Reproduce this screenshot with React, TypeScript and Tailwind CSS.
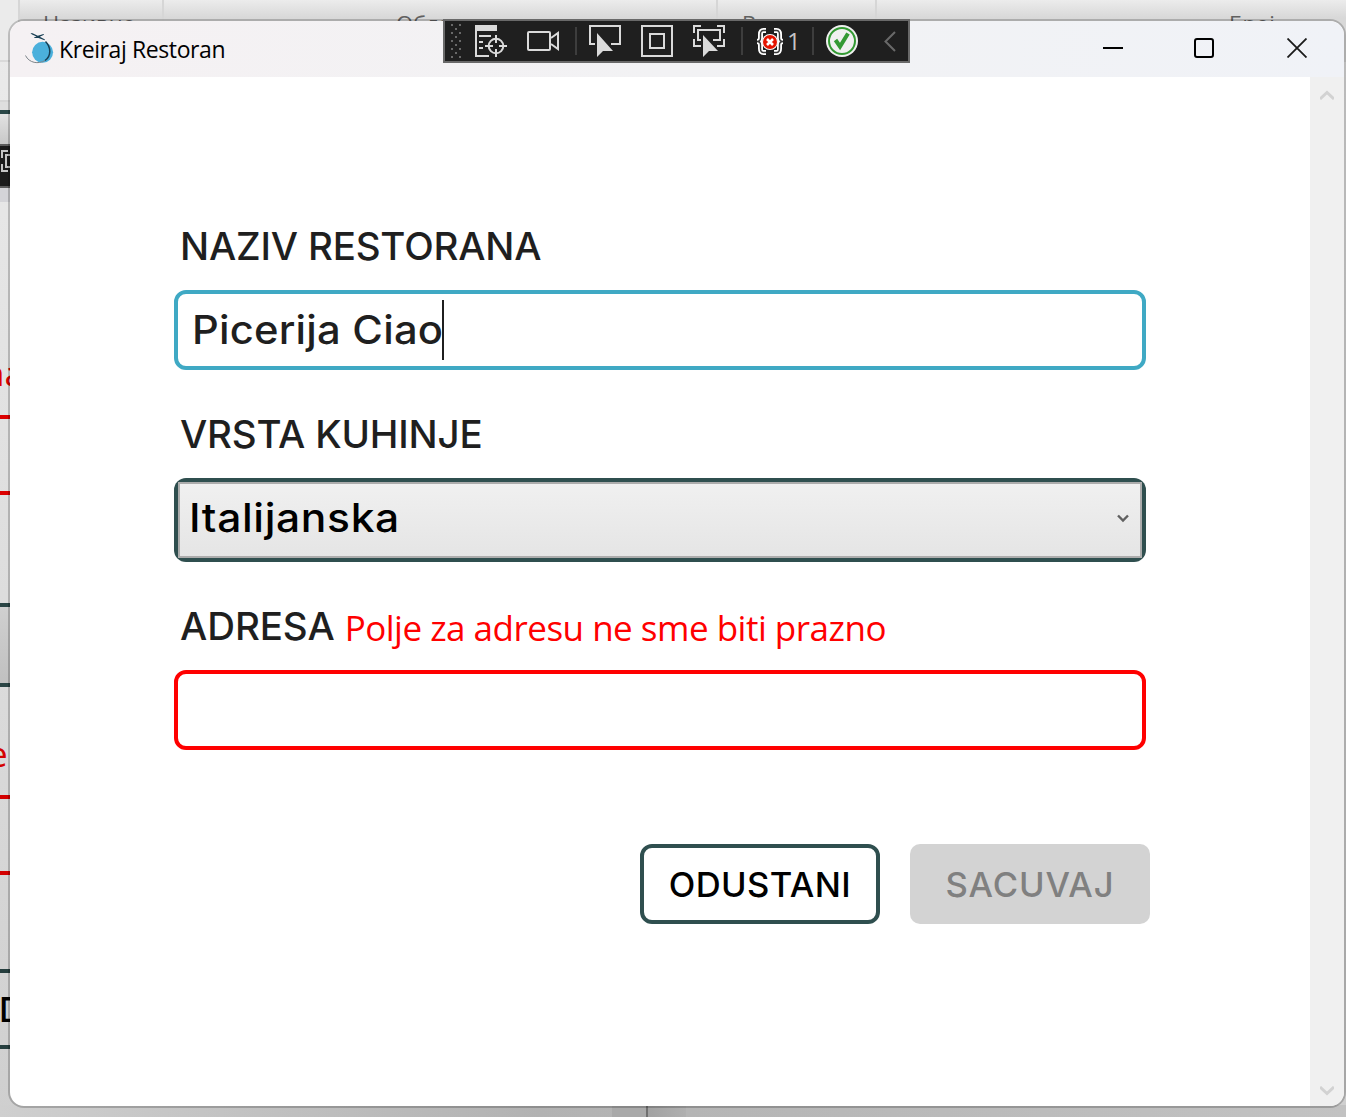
import React from 'react'

const labelText = "font-['Inter',sans-serif] text-[38.5px] leading-[60px] font-medium text-[#1f1f1f] whitespace-nowrap"

function AppIcon() {
  return (
    <svg width="30" height="34" viewBox="0 0 30 34" fill="none">
      <circle cx="17.6" cy="20.300" r="10.500" fill="#4bb0dc" />
      <path d="M20.500 9.500C26 15 26.500 24 20 28.500" stroke="#193f54" strokeWidth="1.500" />
      <path d="M20 28.500C13.500 32.500 4 31 .5 23.500" stroke="#7b8388" strokeWidth="1" />
      <path d="M5.500 1L7.500 1.200L12.800 3.800L18.500 2L19 2.700L14.800 4.800L20 7.500L19.500 8.300L13.500 6L9 6L9.500 5.200L11.500 4.600L7 2.500Z" fill="#193f54" />
    </svg>
  )
}

const Separator = () => <div className="h-[28px] w-[2px] bg-[#3d3d3d]" />

function Braces({ color, width }: { color: string; width: number }) {
  return (
    <g stroke={color} strokeWidth={width}>
      <path d="M11 2.500H8.500C6 2.500 5.500 4 5.500 6.500V10C5.500 12 4.500 13.500 2 13.500C4.500 13.500 5.500 15 5.500 17V20.500C5.500 23 6 24.500 8.500 24.500H11" />
      <path d="M19 2.500H21.500C24 2.500 24.500 4 24.500 6.500V10C24.500 12 25.500 13.500 28 13.500C25.500 13.500 24.500 15 24.500 17V20.500C24.500 23 24 24.500 21.500 24.500H19" />
    </g>
  )
}

function DebugToolbar() {
  const dots = [24, 32, 40, 48, 56]
  return (
    <div className="absolute left-[443px] top-[19px] flex h-[44px] w-[467px] items-start border-2 border-[#696969] bg-[#1f1f1f] pt-[3px]">
      <svg className="ml-[6px]" width="10" height="35" fill="#696969">
        {dots.map((y) => (
          <g key={y}>
            <rect x="0" y={y - 24} width="2" height="2" />
            <rect x="8" y={y - 24} width="2" height="2" />
            {y < 56 && <rect x="4" y={y - 20} width="2" height="2" />}
          </g>
        ))}
      </svg>
      <svg className="ml-[14px] mt-px" width="32" height="32" fill="none" stroke="#dadada" strokeWidth="2">
        <path d="M0 0H22V6H2V30H14V32H0Z" fill="#dadada" stroke="none" />
        <path d="M4 11H16M4 17H8M4 23H8" />
        <circle cx="21" cy="21" r="7.3" />
        <path d="M21 10V18M21 24V32M10 21H18M24 21H32" />
      </svg>
      <svg className="ml-[20px] mt-[7px]" width="32" height="20" fill="none" stroke="#dadada" strokeWidth="2">
        <rect x="1" y="1" width="22" height="18" rx="1" />
        <path d="M24 7L31 2V18L24 13" />
      </svg>
      <div className="ml-[16px] mt-[3px]"><Separator /></div>
      <svg className="ml-[12px] mt-px" width="32" height="32" fill="none" stroke="#dadada" strokeWidth="2">
        <path d="M6 19H1V1H31V19H22" />
        <path d="M8 8V32L14 26H24Z" fill="#dadada" stroke="none" />
      </svg>
      <svg className="ml-[20px] mt-px" width="32" height="32" fill="none" stroke="#dadada" strokeWidth="2">
        <rect x="1" y="1" width="30" height="30" />
        <rect x="9" y="9" width="14" height="14" />
      </svg>
      <svg className="ml-[20px] mt-px" width="32" height="32" fill="none" stroke="#dadada" strokeWidth="2">
        <path d="M8 1H1V8M24 1H31V8M1 14V21H8M31 14V21H24" />
        <path d="M8 15H5V5H27V15H20" />
        <path d="M10 10V32L16 26H25Z" fill="#dadada" stroke="none" />
      </svg>
      <div className="ml-[16px] mt-[3px]"><Separator /></div>
      <svg className="ml-[12px] mt-[4px]" width="30" height="28" fill="none">
        <Braces color="#fff" width={5} />
        <Braces color="#3a3a3a" width={1.4} />
        <circle cx="15" cy="14" r="8" fill="#fff" />
        <circle cx="15" cy="14" r="7" fill="#e51400" />
        <path d="M12 11L18 17M18 11L12 17" stroke="#fff" strokeWidth="2.600" />
      </svg>
      <span className="ml-[2px] mt-[3px] w-[14px] font-['Open_Sans',sans-serif] text-[24px] leading-[28px] text-[#c4c4c4]">1</span>
      <div className="ml-[11px] mt-[3px]"><Separator /></div>
      <svg className="ml-[12px] mt-px" width="32" height="32" fill="none">
        <circle cx="16" cy="16" r="16" fill="#f0f0f0" />
        <circle cx="16" cy="16" r="13" stroke="#339933" strokeWidth="2" />
        <path d="M9.500 15L14 21.500L22 8.500" stroke="#339933" strokeWidth="4" />
      </svg>
      <svg className="ml-[26px] mt-[7px]" width="12" height="21" fill="none" stroke="#696969" strokeWidth="2">
        <path d="M11 1L1.500 10.500L11 20" />
      </svg>
    </div>
  )
}

function TitleBar() {
  return (
    <header className="flex h-[56px] items-center rounded-t-[14px] bg-linear-to-r from-[#f5f1f3] via-[#f2f2f4] to-[#f0f2f7]">
      <div className="ml-[15px]"><AppIcon /></div>
      <h1 className="ml-[4px] font-['Open_Sans',sans-serif] text-[23px] leading-[40px] tracking-[-0.4px] whitespace-nowrap text-black">Kreiraj Restoran</h1>
      <div className="mr-[37px] mb-[2px] ml-auto flex items-center">
        <svg width="20" height="20" stroke="#000" strokeWidth="2"><path d="M0 10H20" /></svg>
        <svg className="ml-[71px]" width="20" height="20" fill="none" stroke="#000" strokeWidth="2"><rect x="1" y="1" width="18" height="18" rx="2" /></svg>
        <svg className="ml-[73px]" width="20" height="20" stroke="#1a1a1a" strokeWidth="1.800"><path d="M.5 .5L19.500 19.500M19.500 .5L.5 19.500" /></svg>
      </div>
    </header>
  )
}

function Form() {
  return (
    <form className="flex w-[976px] flex-col pt-[139px]">
      <label className={labelText + ' pl-[6px] tracking-[-0.2px]'}>NAZIV RESTORANA</label>
      <div className="mt-[14px] flex h-[80px] w-[972px] rounded-[12px] border-4 border-[#3fa9c4] bg-white pl-[14px] pt-[6px]">
        <span className="w-[250px] origin-left scale-x-[1.07] font-['Inter',sans-serif] text-[39px] leading-[60px] font-medium tracking-[0.2px] whitespace-nowrap text-[#1f1f1f]">Picerija Ciao</span>
        <span className="h-[60px] w-[2px] bg-[#1f1f1f]" />
      </div>
      <label className={labelText + ' mt-[34px] pl-[6px] tracking-[-0.2px]'}>VRSTA KUHINJE</label>
      <div className="mt-[14px] h-[84px] w-[972px] rounded-[12px] bg-[#2f4f4f] p-[4px]">
        <div className="flex h-[76px] items-start justify-between border-2 border-[#acacac] bg-linear-to-b from-[#f0f0f0] to-[#e5e5e5] pr-[11px] pl-[9px]">
          <span className="mt-[4px] origin-left scale-x-[1.09] font-['Inter',sans-serif] text-[39px] leading-[60px] font-medium tracking-[0.6px] whitespace-nowrap text-black">Italijanska</span>
          <svg className="mt-[30px]" width="12" height="9" fill="none" stroke="#606060" strokeWidth="2.400"><path d="M1 1.500L6 6.500L11 1.500" /></svg>
        </div>
      </div>
      <div className="mt-[34px] flex h-[60px] pl-[6px]">
        <label className={labelText + ' tracking-[-0.1px]'}>ADRESA</label>
        <span className="ml-[10px] mt-[2px] font-['Open_Sans',sans-serif] text-[35px] leading-[60px] tracking-[-0.500px] whitespace-nowrap text-[#f00]">Polje za adresu ne sme biti prazno</span>
      </div>
      <div className="mt-[14px] h-[80px] w-[972px] rounded-[12px] border-4 border-[#f00] bg-white" />
      <div className="mt-[94px] flex justify-end gap-[30px] font-['Inter',sans-serif] text-[34.600px] leading-[72px] font-medium">
        <button type="button" className="h-[80px] w-[240px] rounded-[12px] border-4 border-[#2f4f4f] bg-white tracking-[0.400px] text-black">ODUSTANI</button>
        <button type="button" className="h-[80px] w-[240px] rounded-[10px] bg-[#d3d3d3] tracking-[0.900px] text-[#808080]">SACUVAJ</button>
      </div>
    </form>
  )
}

function Backdrop() {
  return (
    <div className="flex h-full flex-col bg-linear-to-b from-[#ebebeb] via-[#dedede] to-[#cfcfcf]">
      <div className="flex h-[62px] shrink-0 border-b-2 border-[#d9d9d9] bg-linear-to-b from-[#ececec] to-[#d8d8d8] to-30% font-['Open_Sans',sans-serif] text-[22px] leading-[46px] text-[#606060]">
        <div className="w-[20px] border-r-2 border-[#d6d6d6] bg-[#ebebeb]" />
        <div className="w-[144px] border-r-2 border-[#d6d6d6] pl-[23px]">Називно</div>
        <div className="w-[554px] border-r-2 border-[#d6d6d6] pl-[232px]">Област</div>
        <div className="w-[159px] border-r-2 border-[#d6d6d6] pl-[24px]">Врста</div>
        <div className="pl-[352px]">Број</div>
      </div>
      <div className="flex w-[10px] flex-col">
        <div className="mt-[38px] h-[10px] border-t-2 border-[#d6d6d6] bg-[#dedede]" />
        <div className="h-[4px] bg-[#2a4747]" />
        <div className="h-[30px] bg-linear-to-b from-[#e2e2e2] to-[#c8c8c8]" />
        <div className="flex h-[44px] items-start overflow-hidden border-y-2 border-[#5c5c5c] bg-[#1b1b1b] pt-[4px]">
          <svg width="10" height="24" fill="none" stroke="#c4c4c4" strokeWidth="2"><path d="M8 1H2V8M2 14V21H8M10 5H6V17H10" /></svg>
        </div>
        <div className="h-[14px] bg-[#d4d4d8]" />
        <div className="mt-[141px] flex h-[60px] w-[10px] justify-start overflow-hidden font-['Open_Sans',sans-serif] text-[35px] leading-[60px] text-[#dc0000]"><span className="ml-[-17px]">na</span></div>
        <div className="mt-[12px] h-[4px] bg-[#dc0000]" />
        <div className="mt-[72px] h-[4px] bg-[#dc0000]" />
        <div className="mt-[108px] h-[84px] border-y-4 border-[#2a4545] bg-linear-to-b from-[#d0d0d0] to-[#c0c0c0]" />
        <div className="mt-[37px] flex h-[60px] w-[10px] justify-start overflow-hidden font-['Open_Sans',sans-serif] text-[35px] leading-[60px] text-[#d40000]"><span className="ml-[-12px]">e</span></div>
        <div className="mt-[11px] h-[4px] bg-[#d40000]" />
        <div className="mt-[72px] h-[4px] bg-[#d40000]" />
        <div className="mt-[94px] h-[80px] overflow-hidden border-y-4 border-[#263f3f] font-['Inter',sans-serif] text-[34.600px] leading-[72px] font-medium text-black"><span className="ml-[-1px]">D</span></div>
      </div>
      <div className="mt-auto flex h-[12px] bg-linear-to-r from-[#cfcfcf] via-[#b2b2b2] via-40% to-[#c2c2c2]">
        <div className="ml-[612px] w-[34px] bg-[#a9a9a9]" />
        <div className="w-[2px] bg-[#707070]" />
        <div className="w-[38px] bg-linear-to-r from-[#a2a2a2] to-[#b0b0b0]" />
      </div>
    </div>
  )
}

export default function App() {
  return (
    <div className="relative h-[1117px] w-[1346px] overflow-hidden">
      <Backdrop />
      <div className="absolute left-[8px] top-[19px] flex h-[1089px] w-[1338px] flex-col overflow-hidden rounded-[16px] border-2 border-black/20 bg-white bg-clip-padding">
        <TitleBar />
        <main className="flex flex-1 justify-between pl-[164px]">
          <Form />
          <div className="flex w-[34px] flex-col items-center justify-between bg-[#f0f0f0] pt-[13px] pb-[10px]">
            <svg width="14" height="10" fill="none" stroke="#d2d2d2" strokeWidth="3"><path d="M0 9L7 2.500L14 9" /></svg>
            <svg width="14" height="10" fill="none" stroke="#d2d2d2" strokeWidth="3"><path d="M0 1L7 7.500L14 1" /></svg>
          </div>
        </main>
      </div>
      <DebugToolbar />
    </div>
  )
}
